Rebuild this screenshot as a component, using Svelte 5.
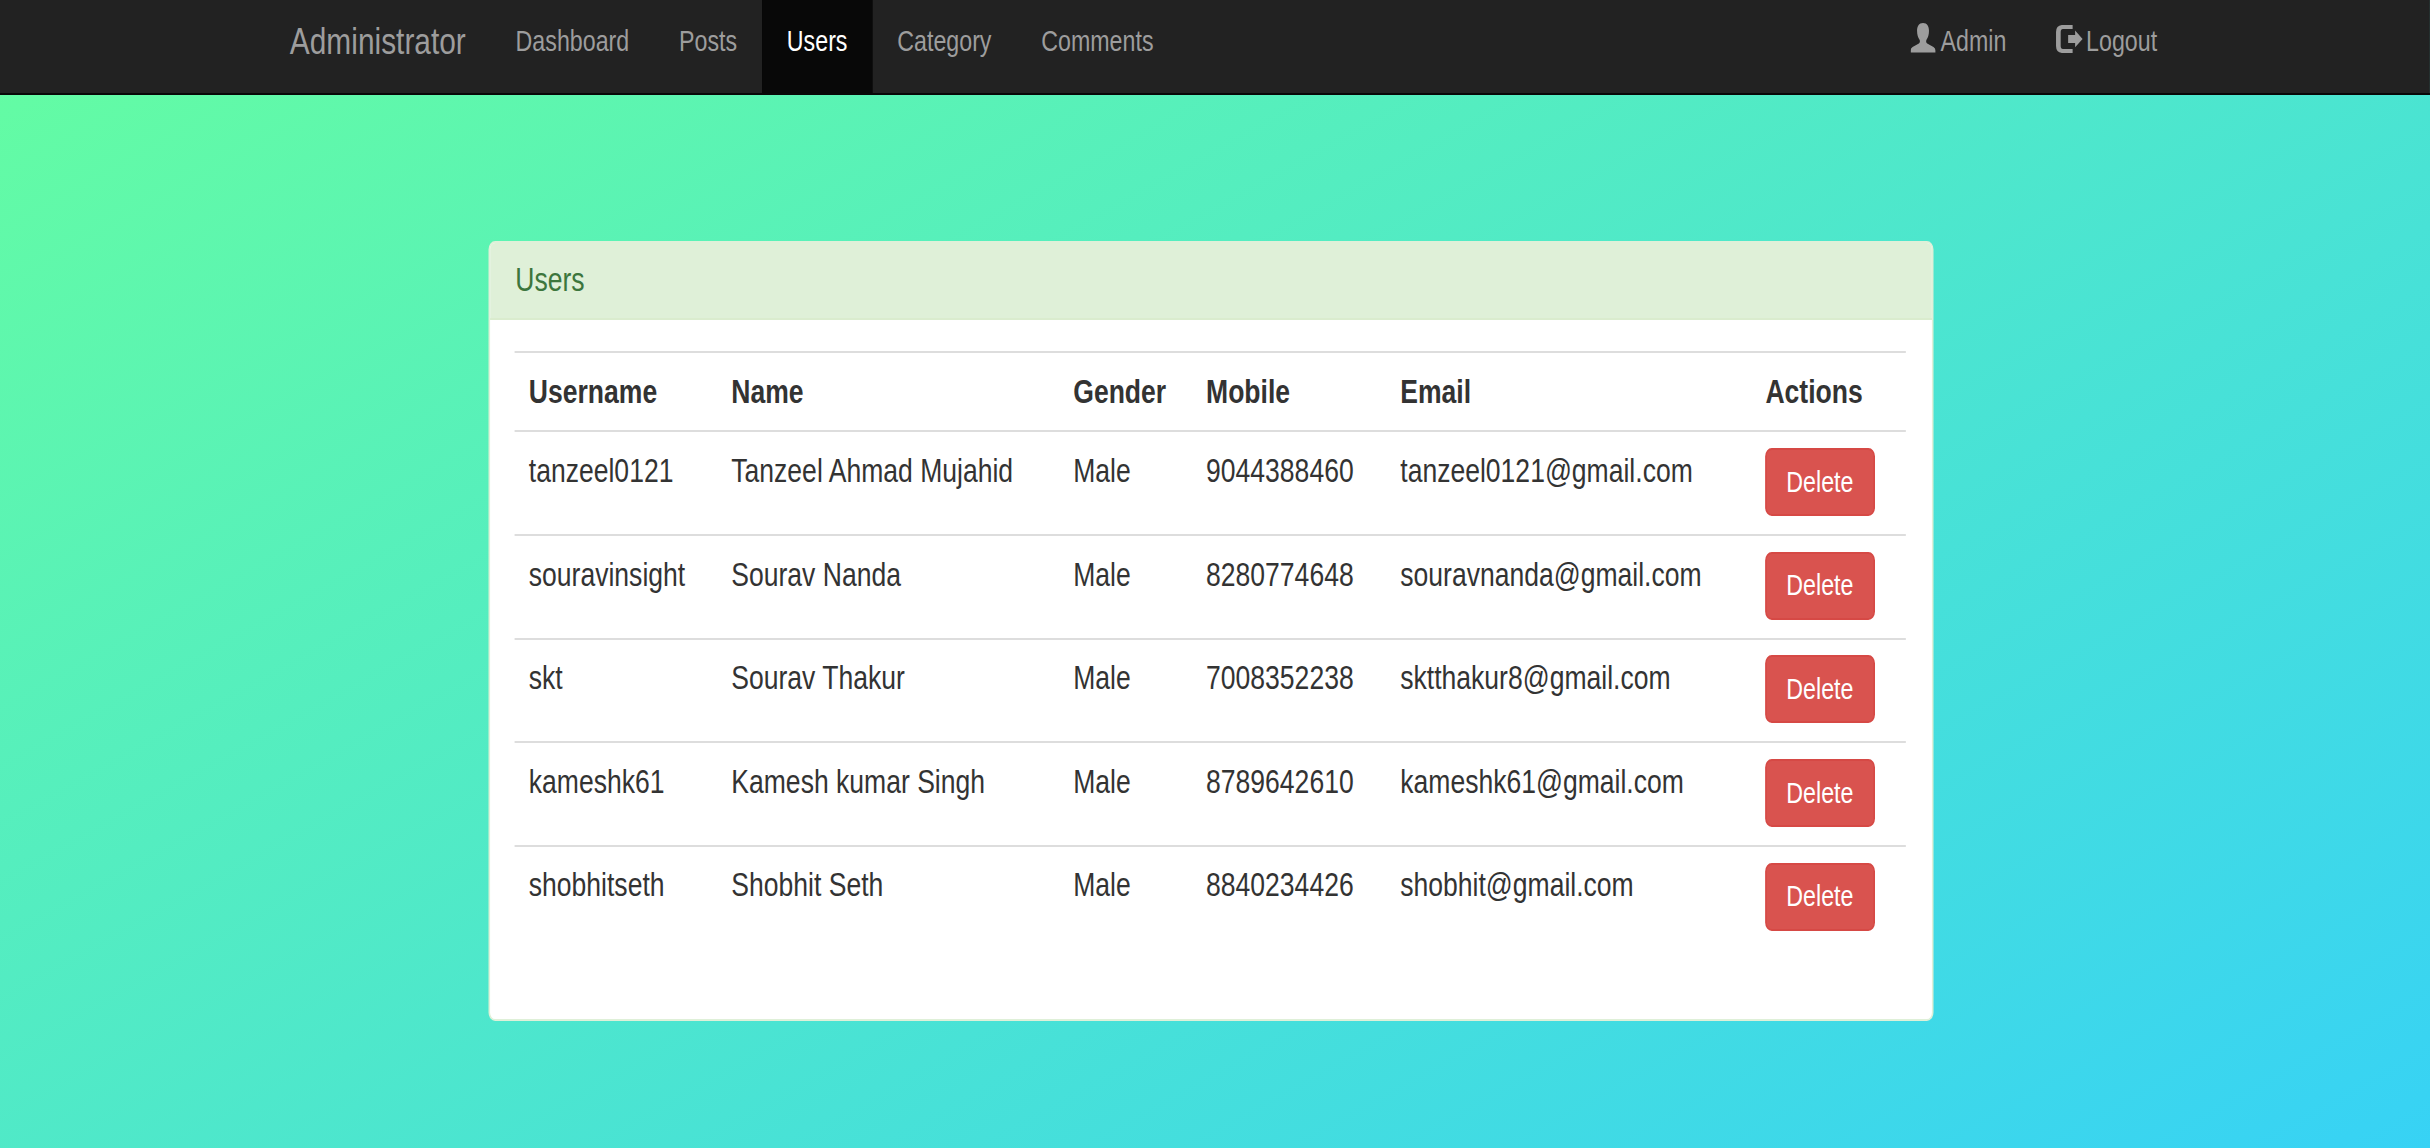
<script>
  const links = ['Dashboard', 'Posts', 'Users', 'Category', 'Comments'];
  const columns = ['Username', 'Name', 'Gender', 'Mobile', 'Email', 'Actions'];
  const users = [
    ['tanzeel0121', 'Tanzeel Ahmad Mujahid', 'Male', '9044388460', 'tanzeel0121@gmail.com'],
    ['souravinsight', 'Sourav Nanda', 'Male', '8280774648', 'souravnanda@gmail.com'],
    ['skt', 'Sourav Thakur', 'Male', '7008352238', 'sktthakur8@gmail.com'],
    ['kameshk61', 'Kamesh kumar Singh', 'Male', '8789642610', 'kameshk61@gmail.com'],
    ['shobhitseth', 'Shobhit Seth', 'Male', '8840234426', 'shobhit@gmail.com']
  ];
</script>

<div class="frame">
  <div class="page">
    <nav class="navbar">
      <a class="brand" href="#home">Administrator</a>
      <ul class="links">
        {#each links as link}
          <li><a href="#{link}" class:active={link === 'Users'}>{link}</a></li>
        {/each}
      </ul>
      <ul class="links account">
        <li>
          <a href="#admin">
            <svg class="icon person" viewBox="0 0 15 15" preserveAspectRatio="none">
              <path d="M7.500 0C5 0 3.900 1.700 3.900 4c0 2 .6 3.600 1.500 4.600.4.600.3 1.500-.4 1.900L1.200 12.300Q0 12.900 0 14v1h15v-1q0-1.100-1.200-1.700L10 10.500c-.7-.4-.8-1.300-.4-1.900.9-1 1.500-2.600 1.500-4.600C11.100 1.700 10 0 7.500 0z" />
            </svg>Admin
          </a>
        </li>
        <li>
          <a href="#logout">
            <svg class="icon exit" viewBox="0 0 16 14" preserveAspectRatio="none">
              <path d="M10 0H3.500Q0 .3 0 3.500v7Q0 13.700 3.500 14H10v-2H4.200q-1.400 0-1.400-1.500v-7Q2.800 2 4.200 2H10z" />
              <path d="M11.500 2.800 16 7l-4.500 4.200V9H7.300V5h4.200z" />
            </svg>Logout
          </a>
        </li>
      </ul>
    </nav>

    <section class="panel">
      <header>Users</header>
      <div class="body">
        <div class="table" role="table">
          <div class="row head" role="row">
            {#each columns as column}<div class="cell" role="columnheader">{column}</div>{/each}
          </div>
          {#each users as user}
            <div class="row" role="row">
              {#each user as value}<div class="cell" role="cell">{value}</div>{/each}
              <div class="cell action" role="cell"><button type="button">Delete</button></div>
            </div>
          {/each}
        </div>
      </div>
    </section>
  </div>
</div>

<style>
  :global(body) {
    margin: 0;
  }
  .frame {
    width: 2430px;
    height: 1148px;
    overflow: hidden;
    background: linear-gradient(151deg, #65fda1, #37d2f5);
  }
  /* The interface is laid out in its own units, enlarged and then condensed to fill the frame. */
  .page {
    zoom: 2.1;
    width: 1463.86px;
    height: 546.67px;
    transform: scaleX(0.790476);
    transform-origin: 0 0;
    font-family: 'Liberation Sans', Arial, sans-serif;
    font-size: 16px;
    line-height: 22px;
    color: #333;
  }
  .navbar {
    box-sizing: border-box;
    display: flex;
    height: 45.24px;
    padding: 0 149.4px 0 159.6px;
    background: #222;
    border-bottom: 1px solid #080808;
  }
  .navbar a {
    display: block;
    box-sizing: border-box;
    height: 44.29px;
    padding: 9.4px 15px 0;
    font-size: 14px;
    line-height: 20px;
    color: #9d9d9d;
    text-decoration: none;
    white-space: nowrap;
  }
  .navbar .brand {
    padding-top: 9.7px;
    font-size: 18px;
  }
  .navbar .active {
    color: #fff;
    background: #080808;
  }
  .links {
    display: flex;
    margin: 0;
    padding: 0;
    list-style: none;
  }
  .account {
    margin-left: auto;
  }
  .icon {
    display: inline-block;
    fill: #9d9d9d;
    vertical-align: -1px;
  }
  .person {
    width: 15px;
    height: 14px;
    margin-right: 3px;
  }
  .exit {
    width: 16px;
    height: 13.3px;
    margin-right: 2px;
  }
  .panel {
    box-sizing: border-box;
    width: 870.4px;
    height: 371.4px;
    margin: 69.5px 0 0 294.5px;
    background: #fff;
    border: 1px solid #dff0d8;
    border-radius: 4px;
    overflow: hidden;
  }
  header {
    box-sizing: border-box;
    height: 36.6px;
    padding: 6.5px 15px 0;
    background: #dff0d8;
    border-bottom: 1px solid #daecce;
    color: #3c763d;
  }
  .body {
    padding: 14.9px 16px 0 14.6px;
  }
  .row {
    box-sizing: border-box;
    display: grid;
    grid-template-columns: 122px 206px 80px 117px 220px 1fr;
    height: 49.35px;
    border-top: 1px solid #ddd;
  }
  .head {
    height: 37.75px;
    font-weight: bold;
  }
  .cell {
    padding: 7.4px 0 0 8.5px;
    white-space: nowrap;
  }
  .action {
    padding: 7.5px 0 0 8.1px;
  }
  button {
    display: block;
    box-sizing: border-box;
    width: 66.4px;
    height: 32.4px;
    padding: 0 0 0.4px;
    border: 1px solid #d64945;
    border-radius: 4px;
    background: #d9534f;
    color: #fff;
    font: 14px/20px 'Liberation Sans', Arial, sans-serif;
  }
</style>
